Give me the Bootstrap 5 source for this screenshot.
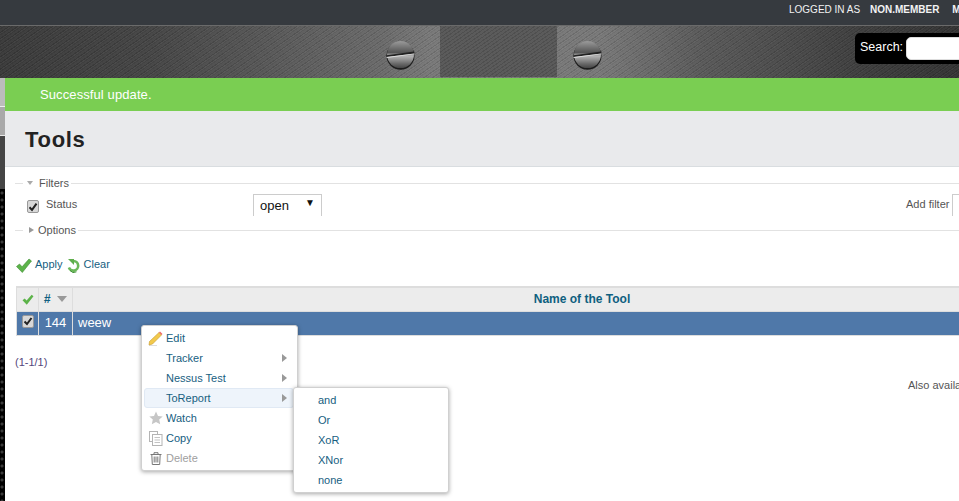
<!DOCTYPE html>
<html lang="en">
<head>
<meta charset="utf-8">
<title>Tools</title>
<link href="https://cdn.jsdelivr.net/npm/bootstrap@5.3.0/dist/css/bootstrap.min.css" rel="stylesheet">
<style>
html,body{height:100%;overflow:hidden;background:#fff}
body{font-family:"Liberation Sans",Arial,sans-serif;font-size:11px;color:#555;line-height:1.2}
.page-root{position:relative;width:959px;height:501px;overflow:hidden}
.topstrip{height:25px;flex:none;background:#363a3f;color:#f2f2f2;font-size:10px;padding-left:789px;white-space:nowrap;padding-top:4px}
.topstrip b{margin-left:7px}
.topstrip .nx{margin-left:10px}
.metal{height:53px;flex:none;white-space:nowrap;border-top:1px solid #6a6a6a;
 background:
 repeating-linear-gradient(145deg,rgba(0,0,0,.10) 0 1px,rgba(255,255,255,.045) 1px 2px,rgba(0,0,0,.03) 2px 3px,rgba(255,255,255,.02) 3px 5px),
 linear-gradient(90deg,#3a3a3a 0,#454545 150px,#6a6a6a 380px,#787878 430px,#787878 600px,#5a5a5a 700px,#3e3e3e 860px,#333 959px)}
.screw{width:29px;height:29px;flex:none;margin-top:6px}
.midbox{width:117px;height:51px;flex:none;align-self:flex-start;background:repeating-linear-gradient(145deg,rgba(0,0,0,.08) 0 1px,rgba(255,255,255,.03) 1px 3px),#565656}
.lead-gap{width:386px;flex:none}
.gap-a{width:25px;flex:none}
.gap-b{width:16px;flex:none}
.gap-c{width:253px;flex:none}
.searchbox{flex:none;align-self:flex-start;width:140px;height:31px;background:#000;border-radius:5px;color:#fff;font-size:12.5px;padding:4px 5px;margin-top:7px}
.searchbox span{padding-bottom:2px}
.searchbox input{width:100px;height:23px;border:1px solid #ddd;border-radius:5px;background:#fff;padding:0;margin-left:3px}
.rail{width:5px;flex:none;background:
 linear-gradient(180deg,#bcbcbc 0 28px,#eee 28px 29px,#a9a9a9 29px 57px,#e8e8e8 57px 58px,#454545 58px 111px,transparent 111px),
 radial-gradient(circle at 2px 3px,#3a3a3a 1px,#000 2px) 0 0/5px 7px}
.mainpane{width:1100px;flex:none}
.flashbar{height:33px;background:#7ace52;color:#fff;font-size:13px;letter-spacing:.1px;padding-left:35px;line-height:33px}
.titleband{height:56px;background:#e9eaec;border-bottom:1px solid #d9dde0;padding-left:20px}
.titleband h1{font-size:22px;font-weight:700;color:#222;margin:0;line-height:57px;letter-spacing:.7px}
.fieldrow{height:12px;padding-left:10px;margin-top:10px}
.fieldrow.second{margin-top:8px}
.fieldrow i{display:block;height:1px;background:#e2e2e2}
.fieldrow .l1{width:8px;flex:none}
.fieldrow .l2{flex:1}
.fieldrow span{margin:0 2px 0 0;padding:2px 0 0}
.tri-d{width:0;height:0;border:3.5px solid transparent;border-top:4px solid #aaa;border-bottom:0;margin:0 6px 0 4px}
.tri-r{width:0;height:0;border:3.5px solid transparent;border-left:5px solid #999;border-right:0;margin:0 4px 0 6px}
.filter-line{height:23px;padding-left:22px;margin-top:4px}
.form-check-input.ck{width:12px;height:13px;margin:0;flex:none;border:1px solid #999;border-radius:2px;opacity:1;
 background-color:#d8d8d8;
 background-image:url("data:image/svg+xml,%3Csvg xmlns='http://www.w3.org/2000/svg' viewBox='0 0 12 12'%3E%3Cpath d='M2.500 6.500l2.500 2.500 4.500-6' fill='none' stroke='%23222' stroke-width='2'/%3E%3C/svg%3E");background-size:12px}
.filter-line .form-check-input.ck{margin-top:3px}
.filter-line .lbl{width:207px;margin-left:7px}
.pick{width:69px;height:22px;border:1px solid #ccc;border-bottom:0;color:#111;font-size:13px;padding:3px 6px 0;flex:none}
.pick em{font-style:normal;font-size:10px;margin-top:-1px}
.addf{margin-left:584px;margin-right:3px}
.pick-b{width:60px;height:22px;border:1px solid #ccc;border-bottom:0;flex:none}
.actions{height:16px;padding-left:11px;margin-top:21px;color:#17607f}
.actions span{margin:0 4px 0 3px}
.actions .clr{margin-left:4px}
.grid-wrap{margin:13px 0 0 11px;width:1076px}
.tooltable{border-collapse:collapse;width:100%;table-layout:fixed;font-size:12px}
.tooltable td,.tooltable th{border:1px solid #ddd;padding:0;vertical-align:middle}
.tooltable thead th{height:24px;background:#ececec;color:#0f5f80;text-align:center;font-weight:700;border-top:2px solid #ddd}
.tooltable tbody td{height:24px;background:#4f78a9;color:#fff;font-size:13px;border-color:#ddd}
.c1{width:22px}.c2{width:34px}
.sortarrow{display:inline-block;width:0;height:0;border:5px solid transparent;border-top:6px solid #999;border-bottom:0;margin-left:7px;vertical-align:1px}
.hash{font-style:italic;color:#0f5f80}
.num{text-align:center}
.nm{padding-left:5px!important}
.pager{margin:20px 0 0 10px;color:#55477c}
.alsoline{margin:10px 0 0 903px;white-space:nowrap;color:#555}
.dropdown-menu.ctx{min-width:0;border:1px solid #d0d0d0;border-radius:3px;box-shadow:0 1px 4px rgba(0,0,0,.35);padding:2px 0;font-size:11px;margin:0;background:#fff}
.ctx-a{left:141px;top:325px;width:157px;height:146px;z-index:5}
.ctx-b{left:293px;top:387px;width:156px;height:106px;z-index:6}
.ctx .dropdown-item{height:20px;line-height:19px;padding:0;color:#17607f;display:flex;align-items:center;font-size:11px;background:none;border:1px solid transparent;margin:0 0 0 2px;border-radius:3px}
.ctx .ico{width:21px;flex:none;display:flex;justify-content:center}
.ctx-a .dropdown-item{width:150px}
.ctx-b .dropdown-item{padding-left:22px;margin-left:1px;width:150px}
.ctx .dropdown-item.hot{background:#eef4fb;border-color:#e0e9f4}
.ctx .dropdown-item.off{color:#a0a0a0}
.ctx .subarrow{margin-left:auto;margin-right:6px;width:0;height:0;border:4px solid transparent;border-left:5px solid #999;border-right:0}
</style>
</head>
<body>
<div class="page-root d-flex flex-column">
  <div class="topstrip">LOGGED IN AS <b>NON.MEMBER</b> <b class="nx">MY ACCOUNT</b></div>
  <div class="metal d-flex align-items-center">
    <div class="lead-gap"></div>
    <svg class="screw" viewBox="0 0 29 29"><defs><linearGradient id="sg" x1="0" y1="0" x2="0" y2="1"><stop offset="0" stop-color="#9a9a9a"/><stop offset=".42" stop-color="#555"/><stop offset=".55" stop-color="#b4b4b4"/><stop offset=".85" stop-color="#666"/><stop offset="1" stop-color="#444"/></linearGradient></defs><circle cx="14.500" cy="14.800" r="14" fill="#1c1c1c"/><circle cx="14.500" cy="13.600" r="13.500" fill="url(#sg)"/><path d="M.6 14.200L28.400 10.600v1.800L.6 16z" fill="#222"/><path d="M.6 16L28.400 12.400v.9L.6 16.900z" fill="#ddd"/></svg>
    <div class="gap-a"></div>
    <div class="midbox"></div>
    <div class="gap-b"></div>
    <svg class="screw" viewBox="0 0 29 29"><circle cx="14.500" cy="14.800" r="14" fill="#1c1c1c"/><circle cx="14.500" cy="13.600" r="13.500" fill="url(#sg)"/><path d="M.6 14.200L28.400 10.600v1.800L.6 16z" fill="#222"/><path d="M.6 16L28.400 12.400v.9L.6 16.900z" fill="#ddd"/></svg>
    <div class="gap-c"></div>
    <div class="searchbox d-flex align-items-center"><span>Search:</span><input type="text" aria-label="Search"></div>
  </div>
  <div class="d-flex flex-fill">
    <div class="rail"></div>
    <div class="mainpane">
      <div class="flashbar">Successful update.</div>
      <div class="titleband"><h1>Tools</h1></div>
      <div class="fieldrow d-flex align-items-center"><i class="l1"></i><div class="tri-d"></div><span>Filters</span><i class="l2"></i></div>
      <div class="filter-line d-flex align-items-center">
        <input class="form-check-input ck" type="checkbox" checked aria-label="Status">
        <div class="lbl">Status</div>
        <div class="pick d-flex justify-content-between"><span>open</span><em>&#9660;</em></div>
        <div class="addf">Add filter</div>
        <div class="pick-b"></div>
      </div>
      <div class="fieldrow second d-flex align-items-center"><i class="l1"></i><div class="tri-r"></div><span>Options</span><i class="l2"></i></div>
      <div class="actions d-flex align-items-center">
        <svg width="16" height="15" viewBox="0 0 16 15"><path d="M.5 8.500l3-2.500 2.600 2.800L13 1l2.500 2L6.300 14.500z" fill="#5cb349" stroke="#3f8f35" stroke-width=".6"/></svg>
        <span>Apply</span>
        <svg width="13" height="15" viewBox="0 0 13 15"><path d="M6.500 3a4.800 4.800 0 1 1-4.600 6.500" fill="none" stroke="#6bb858" stroke-width="2.600"/><path d="M1 1h6v6z" fill="#5fae4c"/><path d="M3 12.500a5 5 0 0 0 6.500 1.300" fill="none" stroke="#3f8f35" stroke-width="1"/></svg>
        <span class="clr">Clear</span>
      </div>
      <div class="grid-wrap">
        <table class="tooltable">
          <colgroup><col class="c1"><col class="c2"><col></colgroup>
          <thead><tr>
            <th><svg width="12" height="11" viewBox="0 0 16 15"><path d="M.5 8.500l3-2.500 2.600 2.800L13 1l2.500 2L6.300 14.500z" fill="#5cb349"/></svg></th>
            <th><span class="hash">#</span><span class="sortarrow"></span></th>
            <th>Name of the Tool</th>
          </tr></thead>
          <tbody><tr>
            <td class="text-center"><input class="form-check-input ck d-block mx-auto mb-1" type="checkbox" checked aria-label="Select"></td>
            <td class="num">144</td>
            <td class="nm">weew</td>
          </tr></tbody>
        </table>
      </div>
      <div class="pager">(1-1/1)</div>
      <div class="alsoline">Also available in:</div>
    </div>
  </div>

  <ul class="dropdown-menu show ctx ctx-a list-unstyled">
    <li><a class="dropdown-item" href="#"><span class="ico"><svg width="15" height="15" viewBox="0 0 15 15"><path d="M1 14.500h8" stroke="#ddd"/><path d="M1.500 10.500L11 1.500l2.500 2.500-9 9L1 14z" fill="#f2c94c" stroke="#c79a2c" stroke-width=".6"/><path d="M11 1.500l1-1 2.500 2.500-1 1z" fill="#e66"/></svg></span>Edit</a></li>
    <li><a class="dropdown-item" href="#"><span class="ico"></span>Tracker<span class="subarrow"></span></a></li>
    <li><a class="dropdown-item" href="#"><span class="ico"></span>Nessus Test<span class="subarrow"></span></a></li>
    <li><a class="dropdown-item hot" href="#"><span class="ico"></span>ToReport<span class="subarrow"></span></a></li>
    <li><a class="dropdown-item" href="#"><span class="ico"><svg width="14" height="14" viewBox="0 0 14 14"><path d="M7 .5l2 4.400 4.700.5-3.500 3.200 1 4.700L7 10.900 2.800 13.300l1-4.700L.3 5.400 5 4.900z" fill="#c6c6c6"/></svg></span>Watch</a></li>
    <li><a class="dropdown-item" href="#"><span class="ico"><svg width="14" height="15" viewBox="0 0 14 15" fill="#fff" stroke="#b4b4b4"><rect x=".5" y=".5" width="8" height="10"/><rect x="3.500" y="3.500" width="9.500" height="11"/><path d="M5.500 6.500h5.500M5.500 9h5.500M5.500 11.500h5.500" stroke-width=".8"/></svg></span>Copy</a></li>
    <li><a class="dropdown-item off" href="#"><span class="ico"><svg width="12" height="13" viewBox="0 0 12 13" fill="none" stroke="#777"><path d="M.5 2.500h11M4 2.500V.7h4v1.800M1.800 2.500l.5 10h7.400l.5-10M4.200 4.500v6M6 4.500v6M7.800 4.500v6"/></svg></span>Delete</a></li>
  </ul>
  <ul class="dropdown-menu show ctx ctx-b list-unstyled">
    <li><a class="dropdown-item" href="#">and</a></li>
    <li><a class="dropdown-item" href="#">Or</a></li>
    <li><a class="dropdown-item" href="#">XoR</a></li>
    <li><a class="dropdown-item" href="#">XNor</a></li>
    <li><a class="dropdown-item" href="#">none</a></li>
  </ul>
</div>
<script src="https://cdn.jsdelivr.net/npm/bootstrap@5.3.0/dist/js/bootstrap.bundle.min.js"></script>
</body>
</html>
